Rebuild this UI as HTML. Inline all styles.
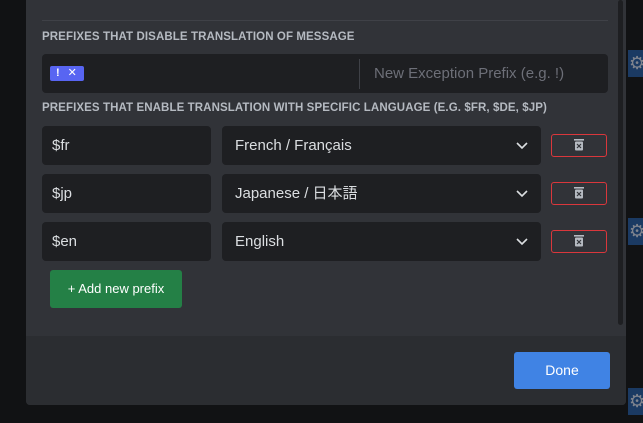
<html><head><style>
body{margin:0;width:643px;height:423px;background:#111214;position:relative;overflow:hidden;font-family:"Liberation Sans","Noto Sans CJK JP",sans-serif}
.m{position:absolute;left:26px;top:0;width:600px;height:405px;background:#313338;border-radius:0 0 4px 4px;overflow:hidden}
.f{position:absolute;left:0;right:0;top:336px;bottom:0;background:#2b2d31}
.a{position:absolute}
h{position:absolute;left:16px;font-size:11.5px;font-weight:bold;color:#b5bac1;letter-spacing:.1px;white-space:nowrap}
.in{position:absolute;background:#1e1f22;border-radius:4px;color:#dbdee1;font-size:15px;box-sizing:border-box;padding-left:10px;line-height:40px}
.sel{padding-left:13px}
.del{position:absolute;left:525px;width:56px;height:23px;border:1px solid #da373c;border-radius:3px;box-sizing:border-box}
.gear{position:absolute;left:628px;width:15px;height:27px;background:#1b3a63;color:#80848e;font-size:18px;line-height:27px;text-indent:1px;overflow:hidden}
</style></head><body>
<div class="gear" style="top:50px">⚙</div><div class="gear" style="top:218px">⚙</div><div class="gear" style="top:388px">⚙</div>
<div class="m">
<div class="a" style="left:16px;top:20px;width:566px;height:1px;background:#3f4147"></div>
<h style="top:31px">PREFIXES THAT DISABLE TRANSLATION OF MESSAGE</h>
<div class="in" style="left:16px;top:54px;width:566px;height:39px"></div>
<div class="a" style="left:24px;top:66px;width:34px;height:15px;background:#5865f2;border-radius:2px;color:#fff;font-size:11px;line-height:15px;font-weight:bold"><span style="margin-left:6px">!</span><span style="margin-left:8px;font-weight:normal">✕</span></div>
<div class="a" style="left:333px;top:59px;width:1px;height:30px;background:#3f4147"></div>
<div class="a" style="left:348px;top:65px;color:#6d6f78;font-size:15px">New Exception Prefix (e.g. !)</div>
<h style="top:102px">PREFIXES THAT ENABLE TRANSLATION WITH SPECIFIC LANGUAGE (E.G. $FR, $DE, $JP)</h>

<div class="in" style="left:16px;top:126px;width:169px;height:39px">$fr</div>
<div class="in sel" style="left:196px;top:126px;width:319px;height:39px">French / Français</div>
<div class="del" style="top:134px"></div>
<div class="in" style="left:16px;top:174px;width:169px;height:39px">$jp</div>
<div class="in sel" style="left:196px;top:174px;width:319px;height:39px">Japanese / 日本語</div>
<div class="del" style="top:182px"></div>
<div class="in" style="left:16px;top:222px;width:169px;height:39px">$en</div>
<div class="in sel" style="left:196px;top:222px;width:319px;height:39px">English</div>
<div class="del" style="top:230px"></div>

<svg class="a" style="left:0;top:0" width="600" height="300">
<g fill="none" stroke="#dbdee1" stroke-width="1.6"><path d="M491 143l5 5 5-5M491 191l5 5 5-5M491 239l5 5 5-5"/></g>
<g fill="#b5bac1">
<rect x="548" y="139" width="10" height="1.6"/><rect x="549" y="141.5" width="8" height="9" rx="1"/>
<rect x="548" y="187" width="10" height="1.6"/><rect x="549" y="189.5" width="8" height="9" rx="1"/>
<rect x="548" y="235" width="10" height="1.6"/><rect x="549" y="237.5" width="8" height="9" rx="1"/></g>
<g stroke="#313338" stroke-width="1.2"><path d="M551 144l4 4M555 144l-4 4M551 192l4 4M555 192l-4 4M551 240l4 4M555 240l-4 4"/></g>
</svg>
<div class="a" style="left:24px;top:270px;width:132px;height:38px;background:#248046;border-radius:3px;color:#fff;font-size:13px;line-height:38px;text-align:center">+ Add new prefix</div>
<div class="a" style="left:592px;top:0;width:5px;height:325px;background:#1e1f22;border-radius:3px"></div>
<div class="f"></div>
<div class="a" style="left:488px;top:352px;width:96px;height:37px;background:#4083e4;border-radius:3px;color:#fff;font-size:14px;line-height:37px;text-align:center">Done</div>
</div>
</body></html>
